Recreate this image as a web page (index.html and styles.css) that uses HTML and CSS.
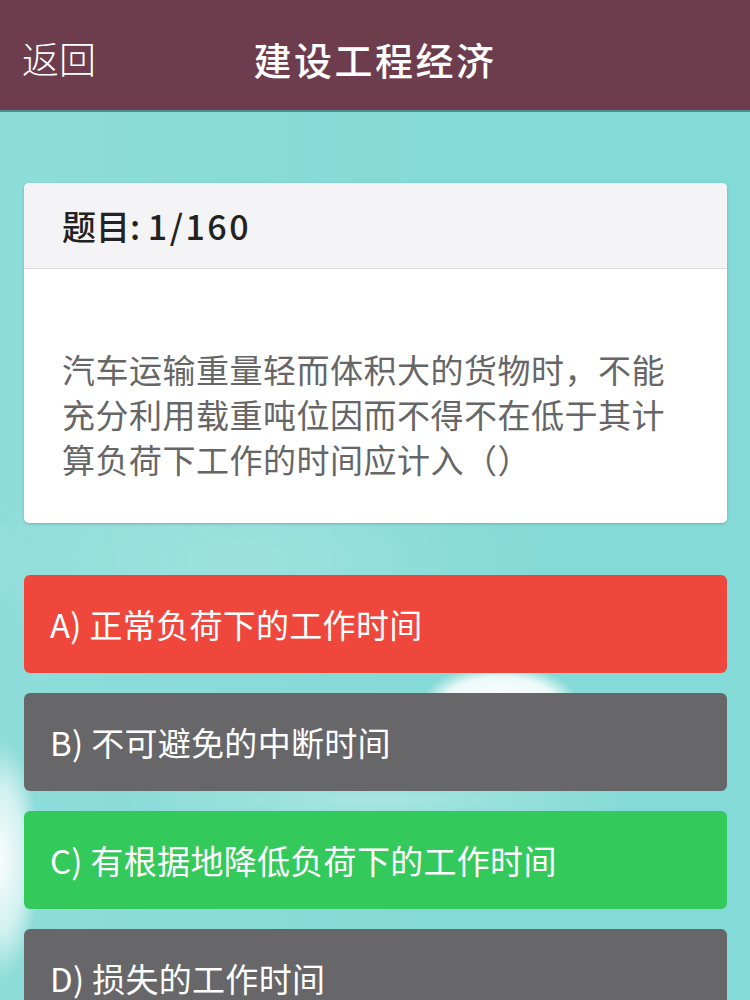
FILE: index.html
```html
<!DOCTYPE html>
<html lang="zh">
<head>
<meta charset="utf-8">
<title>建设工程经济</title>
<link rel="stylesheet" href="styles.css">
</head>
<body>
<header class="topbar">
  <span class="back">返回</span>
  <h1 class="title">建设工程经济</h1>
  <span class="spacer"></span>
</header>
<main class="content">
  <section class="card">
    <div class="card-head">题目: <span class="num">1/160</span></div>
    <div class="card-body">汽车运输重量轻而体积大的货物时，不能充分利用载重吨位因而不得不在低于其计算负荷下工作的时间应计入（）</div>
  </section>
  <ul class="options">
    <li class="option wrong">A) 正常负荷下的工作时间</li>
    <li class="option">B) 不可避免的中断时间</li>
    <li class="option right">C) 有根据地降低负荷下的工作时间</li>
    <li class="option">D) 损失的工作时间</li>
  </ul>
</main>
</body>
</html>
```

FILE: styles.css
```css
html, body {
  margin: 0;
  padding: 0;
}
body {
  width: 750px;
  height: 1000px;
  overflow: hidden;
  font-family: "Noto Sans CJK SC", "Noto Sans", sans-serif;
  background-color: #84dad6;
  background-image:
    radial-gradient(ellipse 40px 120px at 0px 860px, rgba(255,255,255,0.95), rgba(255,255,255,0.6) 60%, rgba(255,255,255,0) 100%),
    radial-gradient(ellipse 80px 40px at 500px 705px, rgba(255,255,255,1), rgba(255,255,255,0.85) 70%, rgba(255,255,255,0) 100%),
    radial-gradient(ellipse 260px 30px at 380px 800px, rgba(255,255,255,0.3), rgba(255,255,255,0) 100%),
    radial-gradient(ellipse 300px 120px at 250px 560px, rgba(255,255,255,0.18), rgba(255,255,255,0) 100%),
    linear-gradient(90deg, rgba(255,255,255,0.08), rgba(255,255,255,0) 60%);
}
.topbar {
  height: 112px;
  background: #6d3d4e;
  display: grid;
  grid-template-columns: 1fr auto 1fr;
  align-items: center;
  padding: 6px 22px 0;
  box-sizing: border-box;
  color: #fff;
  border-bottom: 2px solid #4e8e93;
}
.back {
  font-size: 37px;
  font-weight: 300;
}
.title {
  margin: 0;
  font-size: 38px;
  font-weight: 500;
  letter-spacing: 2.5px;
}
.content {
  padding: 71px 23px 0 24px;
}
.card {
  background: #fff;
  border-radius: 5px;
  box-shadow: 0 1px 3px rgba(0,0,0,0.2);
  overflow: hidden;
}
.card-head {
  height: 86px;
  box-sizing: border-box;
  background: #f4f3f5;
  border-bottom: 1px solid #dcdcdf;
  padding-left: 38px;
  display: flex;
  align-items: center;
  font-size: 34px;
  font-weight: 500;
  color: #222;
  white-space: pre;
}
.num {
  letter-spacing: 2.5px;
}
.card-body {
  padding: 78px 50px 41px 38px;
  font-size: 33px;
  line-height: 45px;
  letter-spacing: 0.5px;
  color: #666;
}
.options {
  list-style: none;
  margin: 52px 0 0;
  padding: 0;
  display: flex;
  flex-direction: column;
  gap: 20px;
}
.option {
  height: 98px;
  border-radius: 6px;
  background: #676668;
  color: #fff;
  font-size: 33px;
  letter-spacing: 0.3px;
  display: flex;
  align-items: center;
  padding-left: 26px;
  box-sizing: border-box;
}
.option.wrong {
  background: #f0473d;
}
.option.right {
  background: #34c95b;
}
```
